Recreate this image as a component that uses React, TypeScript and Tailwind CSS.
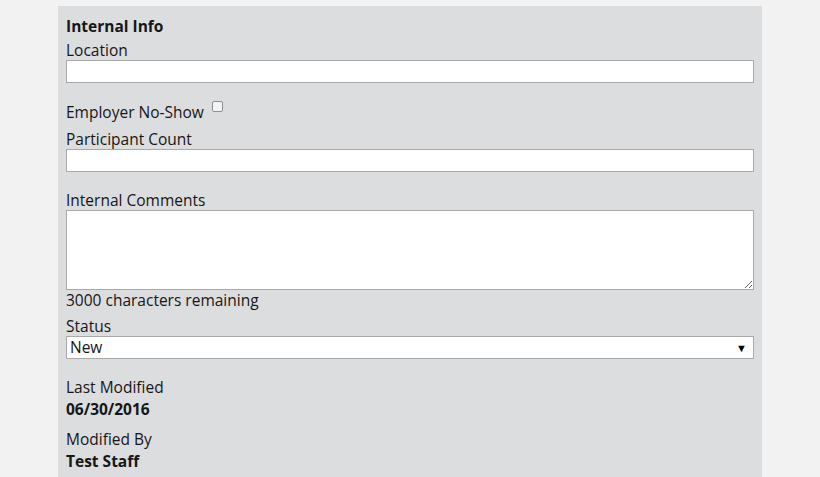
export default function App() {
  const label = "block leading-[20px]";
  const input = "block w-full h-[23px] bg-white border border-[#a9a9a9] px-1 outline-none";

  return (
    <div className="min-h-[477px] bg-[#f2f2f2] pt-[6px] text-[15.5px] text-[#161616] font-['Open_Sans',sans-serif]">
      <div className="ml-[58px] w-[704px] min-h-[471px] bg-[#dcdddf] px-2 pt-[10px] pb-2">
        <h2 className="font-bold leading-[20px]">Internal Info</h2>

        <label className={`${label} mt-[4px]`}>Location</label>
        <input type="text" className={input} />

        <div className="mt-[19px] flex items-start leading-[20px]">
          <span>Employer No-Show</span>
          <span className="ml-[8px] mt-[-1px] h-[11px] w-[11px] rounded-[2px] border border-[#8f8f8f] bg-[#f4f4f4]" />
        </div>

        <label className={`${label} mt-[7px]`}>Participant Count</label>
        <input type="text" className={input} />

        <label className={`${label} mt-[18px]`}>Internal Comments</label>
        <textarea className="block w-full h-[80px] bg-white border border-[#a9a9a9] px-1 outline-none" />
        <p className="leading-[20px]">3000 characters remaining</p>

        <label className={`${label} mt-[6px]`}>Status</label>
        <div className="relative h-[23px] bg-white border border-[#a9a9a9]">
          <span className="absolute left-[3px] top-0 leading-[21px]">New</span>
          <span className="absolute right-[6px] top-[2px] text-[11px] leading-[17px] text-black">▼</span>
        </div>

        <p className="mt-[18px] leading-[20px]">Last Modified</p>
        <p className="mt-[2px] font-bold leading-[20px]">06/30/2016</p>

        <p className="mt-[10px] leading-[20px]">Modified By</p>
        <p className="mt-[2px] font-bold leading-[20px]">Test Staff</p>
      </div>
    </div>
  );
}
